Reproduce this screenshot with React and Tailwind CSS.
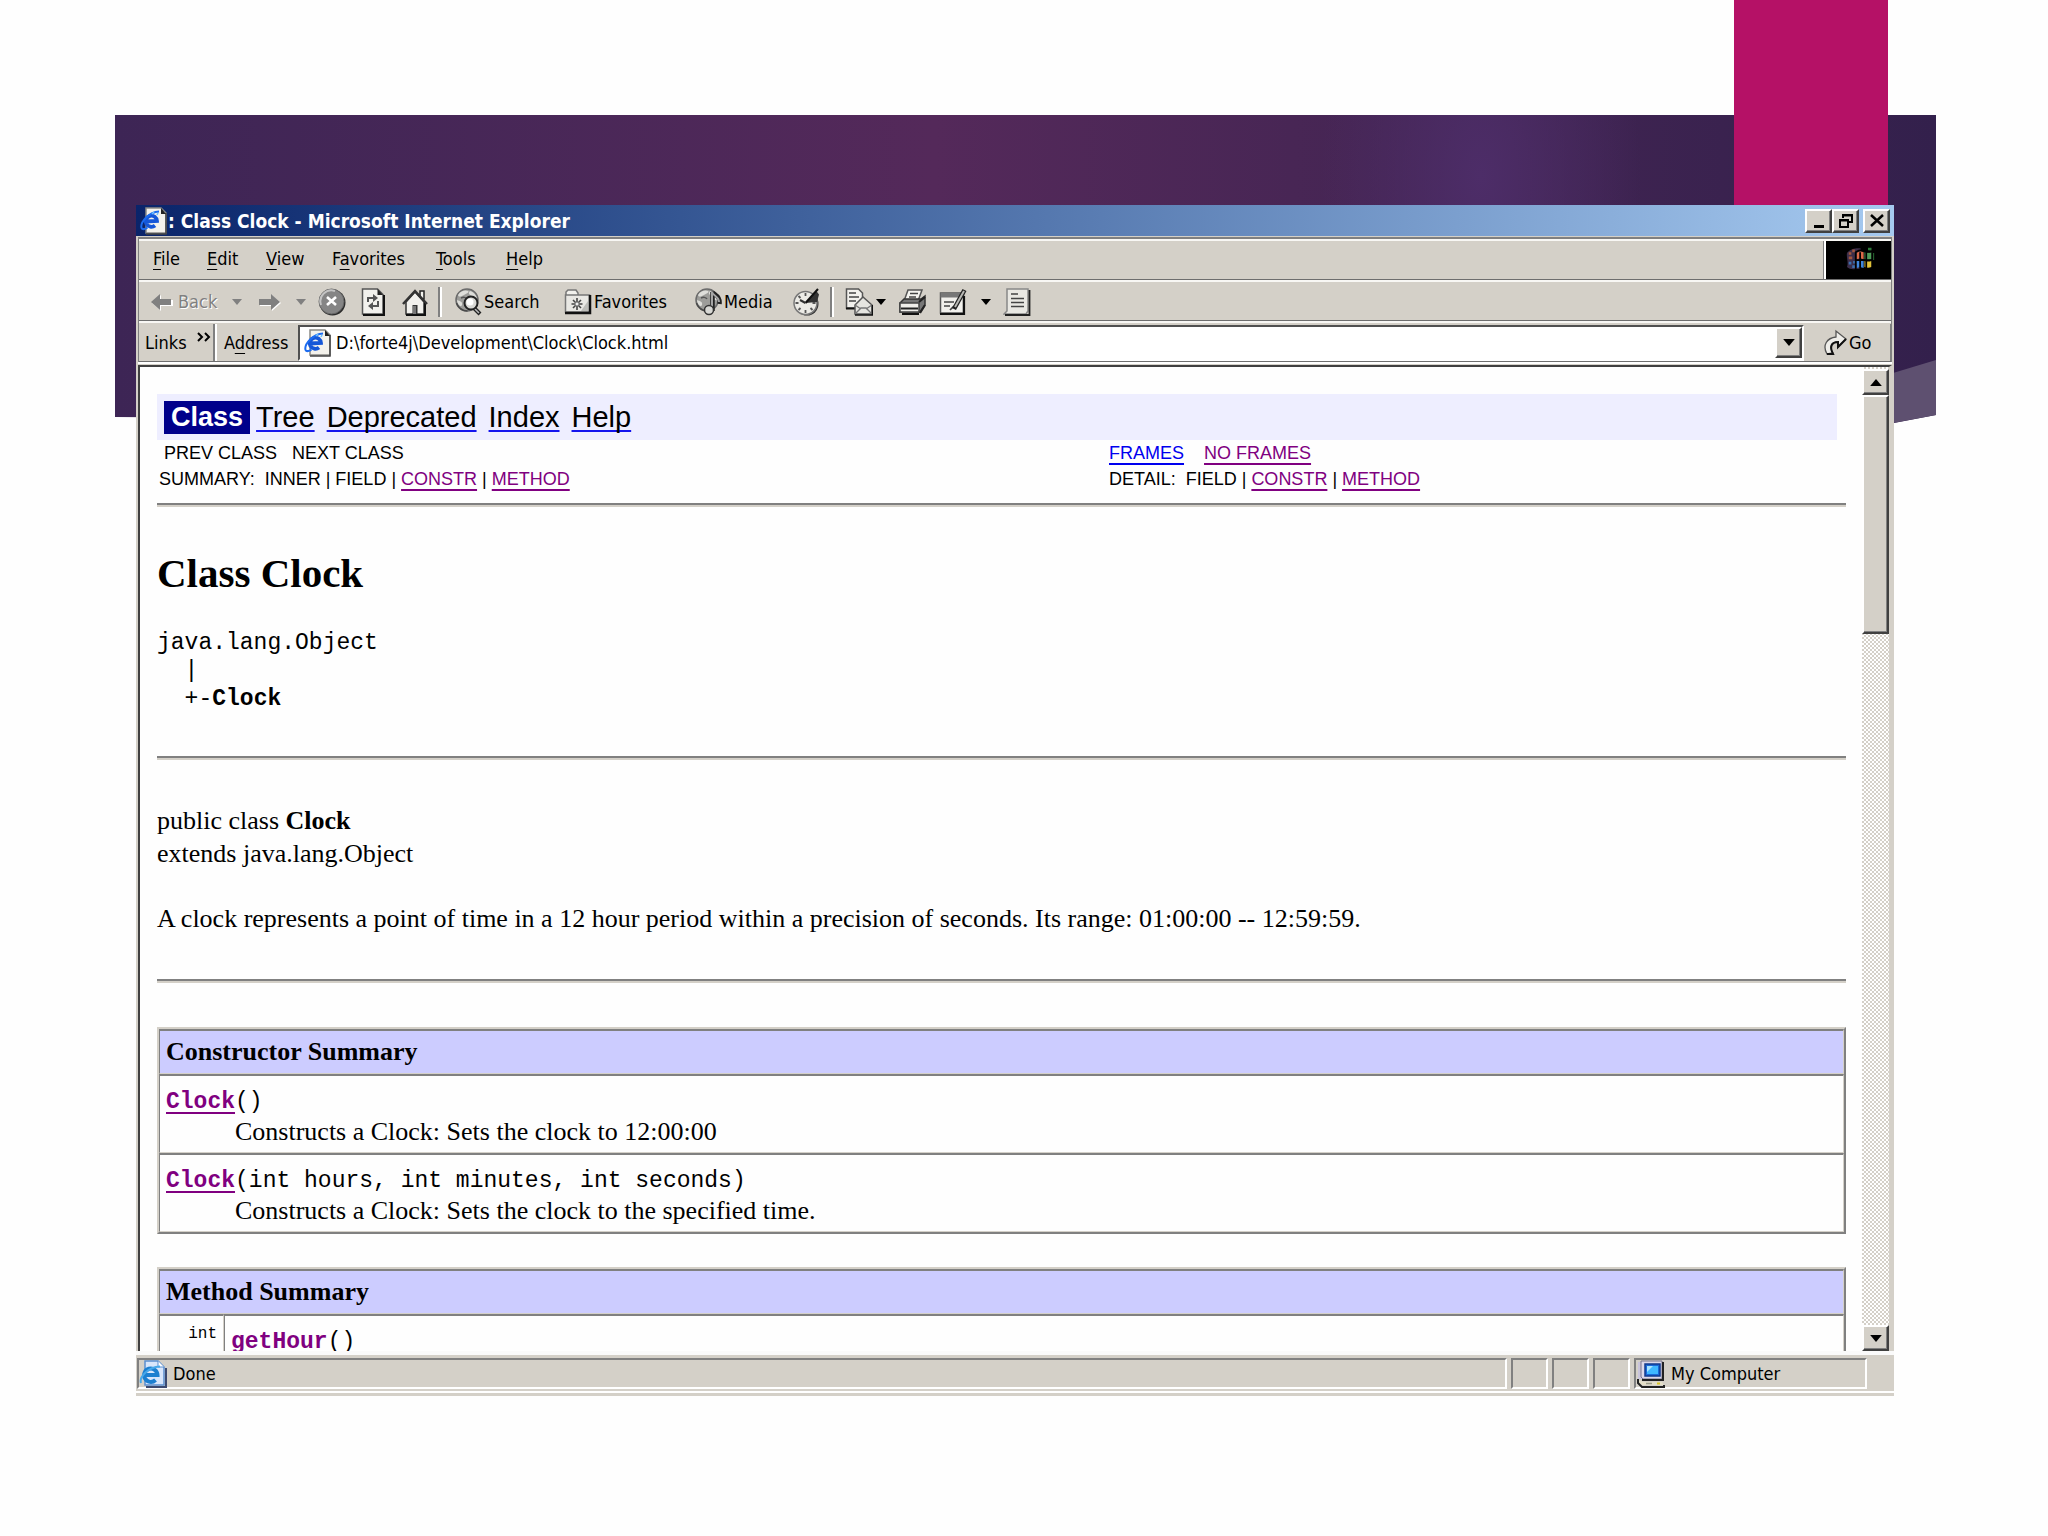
import { clsx } from "clsx"

const uiFont = "font-['DejaVu_Sans_Condensed','DejaVu_Sans',sans-serif]"
const serif = "font-['Liberation_Serif',serif]"
const mono = "font-['Liberation_Mono',monospace]"
const visited = "text-[#800080] underline decoration-2 underline-offset-4 [text-decoration-skip-ink:none]"
const raised =
  "border-2 border-t-white border-l-white border-r-[#404040] border-b-[#404040] bg-[#d4d0c8] shadow-[inset_-1px_-1px_0_#808080]"

function PageIcon({ className }) {
  return (
    <svg className={className} viewBox="0 0 28 28" fill="none" aria-hidden="true">
      <path d="M6 1h15l5 5v20H6z" fill="#f4f2ec" stroke="#8a8a86" strokeWidth="1.5" />
      <path d="M26 6v21H6" stroke="#444" strokeWidth="1.5" />
      <path d="M21 1v6h5z" fill="#222" />
      <path d="M5.500 14.500l11.500-.5a5.600 5.600 0 1 0-2 4.500" stroke="#1557d8" strokeWidth="3.8" />
      <path d="M1.500 21C0 15 9 5 19 4.500M1.500 21c1 2 4 1 6-.5" stroke="#1c6cf0" strokeWidth="2" />
      <path d="M12 7l2-2M17 8l1-2" stroke="#6fc3ff" strokeWidth="1.6" />
    </svg>
  )
}

function StatusPageIcon() {
  return (
    <svg className="h-7 w-7 shrink-0" viewBox="0 0 28 28" fill="none" aria-hidden="true">
      <path d="M6 1h13l6 6v18H6z" fill="#d8e6fb" stroke="#5b8fd0" strokeWidth="1.5" />
      <path d="M27 8v19H7" stroke="#3c4a70" strokeWidth="2" />
      <path d="M19 1v6h6" fill="#fff" stroke="#5b8fd0" />
      <path d="M5 15h13.500a6.700 6.700 0 1 0-2 5" stroke="#1c7fd0" strokeWidth="4" />
      <path d="M2 23C0 17 9 7 21 6.500" stroke="#47a8ea" strokeWidth="2" />
    </svg>
  )
}

function ComputerIcon() {
  return (
    <svg className="h-7 w-7 shrink-0" viewBox="0 0 28 28" aria-hidden="true">
      <path d="M1 2h5v17H1z" fill="#c9c4dc" />
      <path d="M4 1h21v18H6L4 17z" fill="#dcd8e8" stroke="#77748a" />
      <path d="M26 2v18H5" fill="none" stroke="#222" strokeWidth="2" />
      <path d="M8 4h15v12H8z" fill="#1a6ad8" stroke="#123a8c" strokeWidth="1.500" />
      <path d="M10 6h11v8H10z" fill="#3fb8ff" />
      <path d="M10 6h6l-6 6z" fill="#a8e4ff" />
      <path d="M2 20l4 2h19l2 3H5l-4-3z" fill="#e4dfc8" />
      <path d="M1 19v4l4 4h22v-2" fill="none" stroke="#222" strokeWidth="2" />
      <path d="M9 23.500h6" stroke="#998" strokeWidth="1.500" />
      <path d="M20 22.500h3v2h-3z" fill="#d8c428" />
    </svg>
  )
}

function ArrowIcon({ flip }) {
  return (
    <svg className="h-5 w-6 shrink-0" viewBox="0 0 24 20" aria-hidden="true">
      {flip ? (
        <>
          <path d="M24 11l-9-8v5H3v6h12v5z" fill="#fff" />
          <path d="M23 10l-9-8v5H2v6h12v5z" fill="#808080" />
        </>
      ) : (
        <>
          <path d="M2 11l9-8v5h12v6H11v5z" fill="#fff" />
          <path d="M1 10l9-8v5h11v6H10v5z" fill="#808080" />
        </>
      )}
    </svg>
  )
}

function Caret({ className = "h-[6px] w-[10px]" }) {
  return (
    <svg className={clsx("shrink-0", className)} viewBox="0 0 10 6" fill="currentColor" aria-hidden="true">
      <path d="M0 0h10L5 6z" />
    </svg>
  )
}

function StopIcon() {
  return (
    <svg className="h-7 w-7" viewBox="0 0 28 28" aria-hidden="true">
      <circle cx="14.500" cy="14.500" r="13" fill="#2c2c2c" />
      <circle cx="13.500" cy="13.500" r="12.500" fill="#858585" stroke="#666" />
      <path d="M3 17A11 11 0 0 1 17 3" fill="none" stroke="#c4c4c4" strokeWidth="2" />
      <path d="M9 9l9 8M18 9l-9 8" stroke="#fff" strokeWidth="2.600" />
    </svg>
  )
}

function RefreshIcon() {
  return (
    <svg className="h-7 w-6" viewBox="0 0 24 28" fill="none" aria-hidden="true">
      <path d="M1.500 1h15l5.500 5.500V26H1.500z" fill="#f2f1ed" stroke="#555" strokeWidth="1.500" />
      <path d="M23 7v20H2" stroke="#111" strokeWidth="2" />
      <path d="M16.500 1v6H22z" fill="#222" />
      <path d="M7 14v-4h6M17 13v5h-6" stroke="#555" strokeWidth="2" />
      <path d="M12 6l5 4-5 4zM12 14l-5 4 5 4z" fill="#555" />
    </svg>
  )
}

function HomeIcon() {
  return (
    <svg className="h-7 w-7" viewBox="0 0 28 28" fill="none" aria-hidden="true">
      <path d="M19 3h4v8h-4z" fill="#f4f4f0" stroke="#222" strokeWidth="1.500" />
      <path d="M5 14l9-10 9 10v12H5z" fill="#f2f1ed" stroke="#333" strokeWidth="1.500" />
      <path d="M24 14v13H5" stroke="#111" strokeWidth="2" />
      <path d="M2 16L14 3l12 13" stroke="#333" strokeWidth="2.500" />
      <path d="M11.500 17h5v9h-5z" fill="#333" />
      <path d="M12 18h3v8h-3z" fill="#777" />
    </svg>
  )
}

function Globe() {
  return (
    <>
      <circle cx="13" cy="12" r="11" fill="#9d9d9a" stroke="#6b6b6b" strokeWidth="1.500" />
      <path d="M4 7c3-5 8-5 10-4s-2 3-4 4-5 3-6 0zM16 3c4 1 7 5 7 8s-4 0-5-2-5-3-2-6zM3 12c3 1 6 2 5 5s-5-1-5-5z" fill="#dededa" />
      <path d="M2.500 15c2 5 6 8 11 8" fill="none" stroke="#4a4a4a" strokeWidth="1.500" />
      <path d="M7 10c2-1 5-1 6 1" fill="none" stroke="#555" strokeWidth="1.500" />
    </>
  )
}

function SearchIcon() {
  return (
    <svg className="h-7 w-7 shrink-0" viewBox="0 0 28 28" aria-hidden="true">
      <Globe />
      <path d="M20 20l6 6" stroke="#222" strokeWidth="4" />
      <path d="M20 20l5 5" stroke="#bbb" strokeWidth="1.500" />
      <circle cx="17" cy="15" r="6.500" fill="#d9d9d5" stroke="#222" strokeWidth="2" />
      <circle cx="16" cy="14" r="3.500" fill="#fff" />
    </svg>
  )
}

function FavoritesIcon() {
  return (
    <svg className="h-7 w-7 shrink-0" viewBox="0 0 28 28" fill="none" aria-hidden="true">
      <path d="M2 8V4l2-2h8l2 3v3" fill="#f2f1ed" stroke="#777" strokeWidth="1.500" />
      <path d="M1.500 7h24v17h-24z" fill="#e9e8e4" stroke="#777" strokeWidth="1.500" />
      <path d="M26 7v18H1" stroke="#111" strokeWidth="2.500" />
      <path d="M17 23h7V13z" fill="#bdbdb9" />
      <path d="M13 10v12M7.500 16h11M9 12l8 8M17 12l-8 8" stroke="#444" strokeWidth="1.600" />
      <path d="M11.500 14.500h3v3h-3z" fill="#eee" />
    </svg>
  )
}

function MediaIcon() {
  return (
    <svg className="h-7 w-7 shrink-0" viewBox="0 0 28 28" aria-hidden="true">
      <Globe />
      <path d="M18.500 23V4c1 3 8 3 7 12" fill="none" stroke="#222" strokeWidth="4.500" />
      <path d="M18 22V4c1 4 7 4 7 10" fill="none" stroke="#a5a5a5" strokeWidth="2" />
      <circle cx="15" cy="22" r="4.500" fill="#d8d8d4" stroke="#333" strokeWidth="1.500" />
    </svg>
  )
}

function HistoryIcon() {
  return (
    <svg className="h-7 w-7" viewBox="0 0 28 28" fill="none" aria-hidden="true">
      <circle cx="15" cy="16" r="11.500" fill="#333" />
      <circle cx="13.500" cy="15" r="11.500" fill="#ecebe6" stroke="#777" strokeWidth="1.500" />
      <path d="M13.500 15L24 2.500l3 4L25 14z" fill="#333" />
      <path d="M13.500 5v3M13.500 22v3M3.500 15h3M20.500 15h3M6.500 8l2 2M18.500 20l2 2M6.500 22l2-2" stroke="#555" strokeWidth="1.800" />
      <path d="M13.500 15L26 1" stroke="#111" strokeWidth="2" />
      <path d="M13.500 15L8 12" stroke="#333" strokeWidth="2" />
    </svg>
  )
}

function MailIcon() {
  return (
    <svg className="h-7 w-7" viewBox="0 0 28 28" fill="none" aria-hidden="true">
      <path d="M1.500 1h12l4 4v15h-16z" fill="#f2f1ed" stroke="#555" strokeWidth="1.500" />
      <path d="M4 5h7M4 9h10M4 13h7" stroke="#444" strokeWidth="1.500" />
      <path d="M1 20.500h9" stroke="#111" strokeWidth="2" />
      <path d="M10 17l8-8 9 8v9H10z" fill="#e6e5e0" stroke="#555" strokeWidth="1.500" />
      <path d="M10 26l6-6h5l6 6M10 17l6 4M27 17l-6 4" stroke="#777" strokeWidth="1.300" />
      <path d="M27.500 17v10H10" stroke="#111" strokeWidth="1.600" />
    </svg>
  )
}

function PrintIcon() {
  return (
    <svg className="h-7 w-7" viewBox="0 0 28 28" fill="none" aria-hidden="true">
      <path d="M10 2h14l-4 11H6z" fill="#f4f3ef" stroke="#555" strokeWidth="1.500" />
      <path d="M12 5.500h8M11 9h7" stroke="#444" strokeWidth="1.500" />
      <path d="M2 15l4-4h17l4-3v9l-5 7H2z" fill="#777" stroke="#333" strokeWidth="1.500" />
      <path d="M2 15h19v9H2z" fill="#efeeea" stroke="#444" strokeWidth="1.500" />
      <path d="M3 20.500h17M22 25l5-8M21 14l6-5" stroke="#222" strokeWidth="2.200" />
      <path d="M4 26h17" stroke="#111" strokeWidth="2" />
    </svg>
  )
}

function EditIcon() {
  return (
    <svg className="h-7 w-7" viewBox="0 0 28 28" fill="none" aria-hidden="true">
      <path d="M1.500 5h23v20h-23z" fill="#f1f0ec" stroke="#555" strokeWidth="1.500" />
      <path d="M1.500 5h23v4.500h-23z" fill="#777" />
      <path d="M25 8v18H1" stroke="#111" strokeWidth="2.200" />
      <path d="M5 14h10M5 18h6M11 22l4-4" stroke="#444" strokeWidth="1.700" />
      <path d="M15 21L25.500 2" stroke="#222" strokeWidth="4.500" />
      <path d="M16 19L25 3" stroke="#b9b9b5" strokeWidth="2" />
    </svg>
  )
}

function NoteIcon() {
  return (
    <svg className="h-7 w-7" viewBox="0 0 28 28" fill="none" aria-hidden="true">
      <path d="M4 1h21v22l-2 3H1l3-3z" fill="#e9e8e3" stroke="#888" strokeWidth="1.500" />
      <path d="M26.500 2v25H2" stroke="#222" strokeWidth="1.800" />
      <path d="M8 6h7M8 10.500h13M8 14.500h13M8 18.500h13" stroke="#444" strokeWidth="1.700" />
    </svg>
  )
}

function GoIcon() {
  return (
    <svg className="h-7 w-6" viewBox="0 0 24 28" aria-hidden="true">
      <path d="M4 25C-1 16 4 9 13 8V2l10 8-8 8v-5c-7 0-9 5-5 11z" fill="#efeeea" stroke="#555" strokeWidth="1.300" />
      <path d="M23 10l-8 8v-5c-6 0-9 4-5 12H4" fill="none" stroke="#111" strokeWidth="2" />
    </svg>
  )
}

function WindowsLogo() {
  return (
    <svg className="h-7 w-8" viewBox="0 0 36 32" aria-hidden="true">
      <path d="M2 8c4-5 12-6 16-5l-1 23c-5 0-11 2-15-2 2-5-1-11 0-16z" fill="#4b3a5c" opacity=".8" />
      <path d="M4 7h3v3H4zM8 4h3v3H8zM4 12h4v3H4z" fill="#a0553f" />
      <path d="M4 18h3v3H4zM8 22h4v3H8zM9 17h4v3H9z" fill="#3d6fae" />
      <path d="M26 2h4v3h-4zM31 8h2v8h-2z" fill="#2e7a3a" />
      <path d="M13 8c3-2 5-2 8-1v8c-3-1-5-1-8 0z" fill="#dd6a48" />
      <path d="M22 7c3 1 5 1 8 0v8c-3 1-5 1-8 0z" fill="#4f9a58" />
      <path d="M13 17c3-1 5-1 8 0v8c-3-1-5-1-8 0z" fill="#3f86dd" />
      <path d="M22 17c3 1 5 1 8 0v7c-3 1-5 1-8 0z" fill="#e0c23a" />
      <path d="M17 7v19M12 16h20M12 27V7c3-2 6-3 9-2s6 2 10 1v19M24 6v20" fill="none" stroke="#000" strokeWidth="2" />
    </svg>
  )
}

function TitleButton({ label, children, className }) {
  return (
    <button type="button" aria-label={label} className={clsx("flex h-6 w-[27px] items-center justify-center", raised, className)}>
      <svg className="h-4 w-4" viewBox="0 0 16 16" fill="none" stroke="#000" aria-hidden="true">
        {children}
      </svg>
    </button>
  )
}

function TitleBar() {
  return (
    <header className="flex h-[31px] items-center bg-linear-to-r from-[#0a246a] to-[#a6caf0] pr-1 pl-1">
      <PageIcon className="h-7 w-7 shrink-0" />
      <h1 className="flex-1 text-[19px] leading-7 font-bold text-white">: Class Clock - Microsoft Internet Explorer</h1>
      <TitleButton label="Minimize">
        <path d="M3 13.500h10" strokeWidth="3" />
      </TitleButton>
      <TitleButton label="Restore">
        <path d="M5 5V2h9v7h-3M5 2.500h9" strokeWidth="2" />
        <path d="M2 7h8v7H2zM2 7.500h8" strokeWidth="2" />
      </TitleButton>
      <TitleButton label="Close" className="ml-1">
        <path d="M2 2l12 11M14 2L2 13" strokeWidth="2.500" />
      </TitleButton>
    </header>
  )
}

const menus = [
  ["", "F", "ile", "w-[54px]"],
  ["", "E", "dit", "w-[59px]"],
  ["", "V", "iew", "w-[66px]"],
  ["F", "a", "vorites", "w-[104px]"],
  ["", "T", "ools", "w-[70px]"],
  ["", "H", "elp", "w-[60px]"],
]

const row = "flex h-[41px] border-t-2 border-b border-t-[#f8f7f4] border-b-[#6e6e6e]"

function MenuBar() {
  return (
    <div className={row}>
      <nav className="flex flex-1 items-center border-r border-[#808080] pb-[2px] pl-[14px]">
        {menus.map(([before, key, after, width]) => (
          <button key={after} type="button" className={clsx("text-left", width)}>
            {before}
            <span className="underline underline-offset-4">{key}</span>
            {after}
          </button>
        ))}
      </nav>
      <div className="flex w-[67px] items-center justify-center border-l-2 border-white bg-black pl-1">
        <WindowsLogo />
      </div>
    </div>
  )
}

function ToolButton({ label, className, children }) {
  return (
    <button type="button" aria-label={label} className={clsx("flex h-9 shrink-0 items-center", className)}>
      {children}
    </button>
  )
}

function Separator() {
  return <div className="h-[30px] w-1 shrink-0 border-r-2 border-l-2 border-r-white border-l-[#808080]" />
}

function ToolBar() {
  return (
    <div className={clsx(row, "items-center pt-px pl-[11px]")}>
      <ToolButton className="w-[78px] gap-1 text-[#808080] [text-shadow:1px_1px_0_#fff]">
        <ArrowIcon />
        Back
      </ToolButton>
      <ToolButton label="Back history" className="w-[18px] justify-center text-[#808080]">
        <Caret />
      </ToolButton>
      <ToolButton label="Forward" className="w-[46px] justify-center">
        <ArrowIcon flip />
      </ToolButton>
      <ToolButton label="Forward history" className="w-[18px] justify-center text-[#808080]">
        <Caret />
      </ToolButton>
      <ToolButton label="Stop" className="w-11 justify-center">
        <StopIcon />
      </ToolButton>
      <ToolButton label="Refresh" className="w-[38px] justify-center">
        <RefreshIcon />
      </ToolButton>
      <ToolButton label="Home" className="w-[46px] justify-center">
        <HomeIcon />
      </ToolButton>
      <Separator />
      <ToolButton className="w-[110px] gap-[2px] pl-3">
        <SearchIcon />
        Search
      </ToolButton>
      <ToolButton className="w-[130px] gap-[2px] pl-3">
        <FavoritesIcon />
        Favorites
      </ToolButton>
      <ToolButton className="w-[100px] gap-[2px] pl-3">
        <MediaIcon />
        Media
      </ToolButton>
      <ToolButton label="History" className="w-12 justify-center">
        <HistoryIcon />
      </ToolButton>
      <Separator />
      <ToolButton label="Mail" className="w-10 pl-[11px]">
        <MailIcon />
      </ToolButton>
      <ToolButton label="Mail options" className="w-[14px] justify-center">
        <Caret />
      </ToolButton>
      <ToolButton label="Print" className="w-12 justify-center">
        <PrintIcon />
      </ToolButton>
      <ToolButton label="Edit" className="w-[34px] justify-center">
        <EditIcon />
      </ToolButton>
      <ToolButton label="Edit options" className="w-8 justify-center">
        <Caret />
      </ToolButton>
      <ToolButton label="Discuss" className="w-[30px] justify-center">
        <NoteIcon />
      </ToolButton>
    </div>
  )
}

function AddressBar() {
  return (
    <div className={clsx(row, "items-center pt-px")}>
      <button type="button" className="flex h-full w-[76px] items-center gap-[10px] border-r-2 border-[#808080] pl-[6px]">
        Links
        <svg className="mb-3 h-[10px] w-[14px]" viewBox="0 0 14 10" fill="none" stroke="#000" strokeWidth="2" aria-hidden="true">
          <path d="M1 1l4 4-4 4M8 1l4 4-4 4" />
        </svg>
      </button>
      <label htmlFor="address" className="flex h-full w-[83px] items-center border-l-2 border-white pl-[7px]">
        <span>
          A<span className="underline underline-offset-4">d</span>dress
        </span>
      </label>
      <div className="flex h-9 flex-1 items-center border-2 border-t-[#505050] border-r-white border-b-white border-l-[#505050] bg-white pl-1">
        <PageIcon className="h-7 w-7" />
        <input
          id="address"
          className="h-7 min-w-0 flex-1 bg-transparent pl-1 outline-none"
          defaultValue="D:\forte4j\Development\Clock\Clock.html"
        />
        <button type="button" aria-label="Show addresses" className={clsx("flex h-[31px] w-[27px] items-center justify-center", raised)}>
          <Caret className="h-[7px] w-3" />
        </button>
      </div>
      <button type="button" className="ml-1 flex h-full w-[83px] items-center gap-[2px] border-r border-[#808080] pl-[15px]">
        <GoIcon />
        Go
      </button>
    </div>
  )
}

function Rule() {
  return <hr className="h-1 border-t-2 border-b-2 border-t-[#808080] border-b-[#d4d0c8]" />
}

function NavLink({ children, className = visited }) {
  return (
    <a href="#" className={className}>
      {children}
    </a>
  )
}

function DocNav() {
  return (
    <>
      <nav className="mr-[9px] flex h-[46px] items-center gap-3 bg-[#eeeeff] pl-[7px] text-[29px] leading-[33px]">
        <span className="-mr-[6px] bg-[#00008b] px-[7px] text-[27px] font-bold text-white">Class</span>
        {["Tree", "Deprecated", "Index", "Help"].map((item) => (
          <NavLink key={item} className="underline decoration-[#1414ee] decoration-2 underline-offset-3 [text-decoration-skip-ink:none]">
            {item}
          </NavLink>
        ))}
      </nav>
      <div className="mr-[9px] grid grid-cols-[17fr_13fr] text-lg leading-[26px] whitespace-pre">
        <div className="pl-[2px]">{" PREV CLASS   NEXT CLASS"}</div>
        <div>
          <NavLink className="text-[#0000ee] underline decoration-2 underline-offset-4">FRAMES</NavLink>
          {"    "}
          <NavLink>NO FRAMES</NavLink>
        </div>
        <div className="pl-[2px]">
          {"SUMMARY:  INNER | FIELD | "}
          <NavLink>CONSTR</NavLink>
          {" | "}
          <NavLink>METHOD</NavLink>
        </div>
        <div>
          {"DETAIL:  FIELD | "}
          <NavLink>CONSTR</NavLink>
          {" | "}
          <NavLink>METHOD</NavLink>
        </div>
      </div>
    </>
  )
}

const cell = "border-t-2 border-r border-b border-l border-t-[#808080] border-r-[#d4d0c8] border-b-[#d4d0c8] border-l-[#808080]"

function SummaryTable({ title, columns, children, className }) {
  return (
    <table
      className={clsx(
        "w-full border-separate border-spacing-0 border-2 border-t-[#d4d0c8] border-r-[#808080] border-b-[#808080] border-l-[#d4d0c8]",
        className
      )}
    >
      <thead>
        <tr>
          <th colSpan={columns} className={clsx(cell, "bg-[#ccccff] px-[6px] text-left leading-[42px] font-bold")}>
            {title}
          </th>
        </tr>
      </thead>
      <tbody>{children}</tbody>
    </table>
  )
}

function Member({ name, args, text }) {
  return (
    <>
      <div className={clsx(mono, "text-[23px] leading-7 whitespace-pre")}>
        <NavLink className={clsx(visited, "font-bold")}>{name}</NavLink>({args})
      </div>
      {text && <div className="pl-[69px] leading-8">{text}</div>}
    </>
  )
}

function Document() {
  return (
    <main className={clsx(serif, "min-w-0 flex-1 overflow-hidden bg-[#fefefe] pt-[27px] pr-4 pl-[17px] text-[26px] leading-[33px]")}>
      <div className="font-['Liberation_Sans',sans-serif]">
        <DocNav />
      </div>
      <div className="mt-[11px]">
        <Rule />
      </div>
      <h2 className="mt-[42px] text-[41px] leading-[48px] font-bold">Class Clock</h2>
      <div className={clsx(mono, "mt-8 mb-[43px] text-[23px] leading-7 whitespace-pre")}>
        <div>java.lang.Object</div>
        <div>{"  |"}</div>
        <div>
          {"  +-"}
          <b>Clock</b>
        </div>
      </div>
      <Rule />
      <p className="mt-11">
        public class <b>Clock</b>
        <br />
        extends java.lang.Object
      </p>
      <p className="mt-8 mb-11">
        A clock represents a point of time in a 12 hour period within a precision of seconds. Its range: 01:00:00 -- 12:59:59.
      </p>
      <Rule />
      <SummaryTable title="Constructor Summary" columns={1} className="mt-11">
        <tr>
          <td className={clsx(cell, "px-[6px] pt-3 pb-1")}>
            <Member name="Clock" text="Constructs a Clock: Sets the clock to 12:00:00" />
          </td>
        </tr>
        <tr>
          <td className={clsx(cell, "px-[6px] pt-3 pb-1")}>
            <Member name="Clock" args="int hours, int minutes, int seconds" text="Constructs a Clock: Sets the clock to the specified time." />
          </td>
        </tr>
      </SummaryTable>
      <SummaryTable title="Method Summary" columns={2} className="mt-[33px]">
        <tr>
          <td className={clsx(cell, mono, "w-[65px] px-[6px] pt-2 text-right align-top text-base leading-5")}>int</td>
          <td className={clsx(cell, "px-[6px] pt-3 pb-9")}>
            <Member name="getHour" />
          </td>
        </tr>
      </SummaryTable>
    </main>
  )
}

function ScrollBar() {
  return (
    <div className="flex w-[27px] flex-col bg-[repeating-conic-gradient(#d4d0c8_0_25%,#ffffff_0_50%)] bg-[length:4px_4px] pt-[2px]">
      <button type="button" aria-label="Scroll up" className={clsx("flex h-[26px] items-center justify-center", raised)}>
        <Caret className="h-[7px] w-3 rotate-180" />
      </button>
      <div className={clsx("h-[239px]", raised)} />
      <div className="flex-1" />
      <button type="button" aria-label="Scroll down" className={clsx("flex h-[26px] items-center justify-center", raised)}>
        <Caret className="h-[7px] w-3" />
      </button>
    </div>
  )
}

const panel = "h-[31px] border-2 border-t-[#808080] border-r-white border-b-white border-l-[#808080]"

function StatusBar() {
  return (
    <footer className="border-t-4 border-[#fafafa]">
      <div className="flex gap-1 bg-[#d4d0c8] pt-[3px] pr-[27px] pb-[2px] pl-px">
        <div className={clsx(panel, "flex flex-1 items-center gap-[6px]")}>
          <StatusPageIcon />
          Done
        </div>
        <div className={clsx(panel, "w-[37px]")} />
        <div className={clsx(panel, "w-[37px]")} />
        <div className={clsx(panel, "w-[37px]")} />
        <div className={clsx(panel, "flex w-[233px] items-center gap-[6px] pl-px")}>
          <ComputerIcon />
          My Computer
        </div>
      </div>
      <div className="h-[5px] border-t-2 border-white bg-[#d4d0c8]" />
    </footer>
  )
}

function Backdrop() {
  return (
    <div className="absolute inset-0" aria-hidden="true">
      <div className="absolute top-[115px] right-[112px] left-[115px] h-[308px] bg-linear-to-r from-[#3d2555] via-[#54295a] via-45% to-[#33204c] [clip-path:polygon(0_0,100%_0,100%_300px,calc(100%_-_42px)_100%,50%_100%,0_302px)]">
        <div className="h-full bg-[radial-gradient(ellipse_160px_280px_at_75%_20%,#4d2d68,transparent)]" />
      </div>
      <div className="absolute top-[360px] right-[112px] h-[63px] w-[43px] bg-[#5e5070] [clip-path:polygon(0_13px,100%_0,100%_55px,0_100%)]" />
      <div className="absolute top-0 right-[160px] h-[205px] w-[154px] bg-[#b51166]" />
    </div>
  )
}

export default function App() {
  return (
    <div className={clsx(uiFont, "relative flex h-screen flex-col bg-[#fefefe] pt-[205px] pr-[154px] pb-[140px] pl-[136px] text-lg text-black")}>
      <Backdrop />
      <div className="relative flex min-h-0 flex-1 flex-col">
        <TitleBar />
        <div className="flex min-h-0 flex-1 flex-col border-r-2 border-l-2 border-[#d4d0c8] bg-[#d4d0c8] pt-px">
          <div className="border-t-2 border-r border-l border-[#808080]">
            <MenuBar />
            <ToolBar />
            <AddressBar />
          </div>
          <div className="h-[3px] border-t-2 border-white" />
          <div className="flex min-h-0 flex-1 border-t-2 border-r-3 border-l-2 border-t-[#404040] border-r-[#d4d0c8] border-l-[#404040]">
            <Document />
            <ScrollBar />
          </div>
        </div>
        <StatusBar />
      </div>
    </div>
  )
}
